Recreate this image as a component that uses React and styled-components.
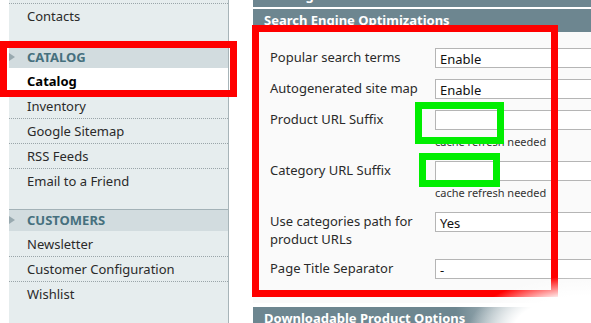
import React from "react";
import styled, { createGlobalStyle } from "styled-components";

const GlobalStyle = createGlobalStyle`
   html, body {
      margin: 0;
      padding: 0;
      background: #ffffff;
   }
   body {
      font-family: "Noto Sans", "Open Sans", sans-serif;
      font-size: 13px;
      color: #1f1f1f;
   }
`

const fields = [
   { label: "Popular search terms", value: "Enable" },
   { label: "Autogenerated site map", value: "Enable" },
   { label: "Product URL Suffix", value: "", note: "cache refresh needed" },
   { label: "Category URL Suffix", value: "", note: "cache refresh needed" },
   { label: "Use categories path for product URLs", value: "Yes", wrap: true },
   { label: "Page Title Separator", value: "-" },
]

const SideGroup = ({ title, items, active, gap }) => (
   <Group $gap={gap}>
      {title && (
         <GroupHead>
            <Arrow />
            {title}
         </GroupHead>
      )}
      {items.map((item, i) => (
         <NavItem key={item} $first={title && i === 0} $active={item === active}>{item}</NavItem>
      ))}
   </Group>
)

const App = () => {
   return (
      <Page>
         <GlobalStyle />
         <Sidebar>
            <SideGroup items={["Contacts"]} gap={18} />
            <SideGroup
               title="CATALOG"
               active="Catalog"
               gap={16}
               items={["Catalog", "Inventory", "Google Sitemap", "RSS Feeds", "Email to a Friend"]}
            />
            <SideGroup
               title="CUSTOMERS"
               items={["Newsletter", "Customer Configuration", "Wishlist"]}
            />
         </Sidebar>
         <Main>
            <Bar $top>Catalog Search</Bar>
            <Bar>Search Engine Optimizations</Bar>
            <Form>
               {fields.map((f) => (
                  <Row key={f.label}>
                     <Label $wrap={f.wrap}>{f.label}</Label>
                     <Value>
                        <Input>{f.value}</Input>
                        {f.note && <Note>{f.note}</Note>}
                     </Value>
                  </Row>
               ))}
            </Form>
            <Bar $bottom>Downloadable Product Options</Bar>
         </Main>
         <Mark $x={0} $y={41} $w={237} $h={56} $color="#ff0000" $t={7} />
         <Mark $x={252} $y={25} $w={306} $h={272} $color="#ff0000" $t={7} />
         <Mark $x={415} $y={102} $w={89} $h={42} $color="#00ee00" $t={7} />
         <Mark $x={419} $y={153} $w={81} $h={34} $color="#00ee00" $t={7} />
         <Fade />
      </Page>
   )
}
export default App

const Page = styled.div`
   position: relative;
   width: 591px;
   height: 323px;
   overflow: hidden;
   display: flex;
   align-items: stretch;
`
const Sidebar = styled.div`
   width: 219px;
   margin-left: 9px;
   padding-top: 3px;
   background: #e6edee;
   border-right: 1px solid #a7b4b8;
   flex-shrink: 0;
`
const Group = styled.div`
   padding-bottom: ${(p) => p.$gap || 0}px;
`
const GroupHead = styled.div`
   position: relative;
   height: 21px;
   line-height: 21px;
   padding-left: 18px;
   background: #d2dcdf;
   border-top: 1px solid #a3b2b7;
   color: #46707e;
   font-weight: 700;
   font-size: 13px;
`
const Arrow = styled.span`
   position: absolute;
   left: 0;
   top: 6px;
   width: 0;
   height: 0;
   border-left: 6px solid #98a9af;
   border-top: 4px solid transparent;
   border-bottom: 4px solid transparent;
`
const NavItem = styled.div`
   height: 24px;
   line-height: 24px;
   padding-left: 18px;
   border-top: 1px ${(p) => (p.$first ? "solid transparent" : "dotted #9aa5a9")};
   background: ${(p) => (p.$active ? "#ffffff" : "transparent")};
   font-weight: ${(p) => (p.$active ? 700 : 400)};
   color: ${(p) => (p.$active ? "#000000" : "#2a2a2a")};
   white-space: nowrap;
`
const Main = styled.div`
   margin-left: 24px;
   flex: 1;
   min-width: 0;
   overflow: hidden;
`
const Bar = styled.div`
   height: 23px;
   line-height: 23px;
   margin-top: ${(p) => (p.$top ? "-16px" : p.$bottom ? "4px" : "2px")};
   padding-left: 11px;
   background: ${(p) => (p.$bottom ? "linear-gradient(90deg, #6d8690 0%, #6d8690 60%, #dfe5e7 85%, #ffffff 100%)" : "#6d8690")};
   color: #ffffff;
   font-weight: 700;
   font-size: 13px;
   white-space: nowrap;
`
const Form = styled.div`
   background: #fafafa;
   padding: 16px 0 24px 17px;
   display: flex;
   flex-direction: column;
   gap: 11px;
`
const Row = styled.div`
   display: flex;
   align-items: flex-start;
`
const Label = styled.div`
   width: 165px;
   flex-shrink: 0;
   line-height: 18px;
   padding-right: ${(p) => (p.$wrap ? "20px" : "0")};
   box-sizing: border-box;
   color: #2a2a2a;
`
const Value = styled.div`
   display: flex;
   flex-direction: column;
`
const Input = styled.div`
   width: 200px;
   height: 20px;
   line-height: 20px;
   box-sizing: border-box;
   padding-left: 4px;
   background: #ffffff;
   border: 1px solid #b5b5b5;
   color: #111111;
`
const Note = styled.div`
   margin-top: 3px;
   line-height: 17px;
   font-size: 11px;
   color: #333333;
`
const Mark = styled.div`
   position: absolute;
   left: ${(p) => p.$x}px;
   top: ${(p) => p.$y}px;
   width: ${(p) => p.$w}px;
   height: ${(p) => p.$h}px;
   box-sizing: border-box;
   border: ${(p) => p.$t}px solid ${(p) => p.$color};
   pointer-events: none;
`
const Fade = styled.div`
   position: absolute;
   left: 470px;
   top: 276px;
   width: 200px;
   height: 90px;
   background: radial-gradient(ellipse at 60% 60%, #ffffff 45%, rgba(255, 255, 255, 0) 72%);
   pointer-events: none;
`
